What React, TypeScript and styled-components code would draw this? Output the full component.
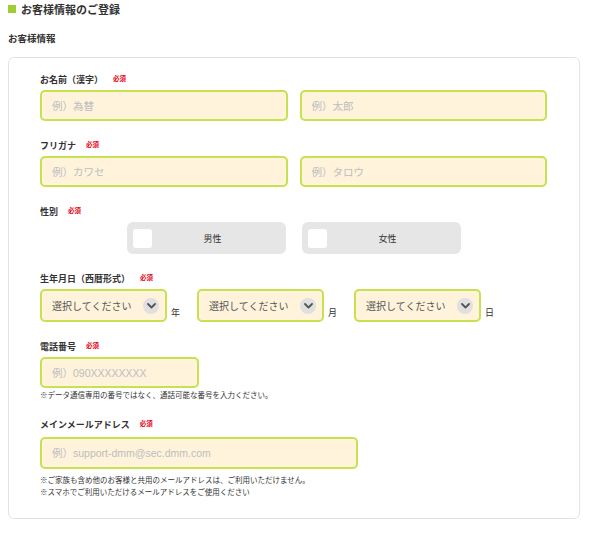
import styled, { createGlobalStyle } from "styled-components";

const GlobalStyle = createGlobalStyle`
  body {
    margin: 0;
    background: #fff;
    color: #333;
    font-family: "Noto Sans CJK JP", "Noto Sans", sans-serif;
  }
  * { box-sizing: border-box; }
`;

const Page = styled.div`
  width: 589px;
  padding: 0 9px 0 8px;
`;

const Title = styled.h1`
  display: flex;
  align-items: center;
  gap: 5px;
  margin: 0;
  height: 18px;
  font-size: 11px;
  font-weight: bold;
  color: #333;
  line-height: 18px;
  &::before {
    content: "";
    width: 8px;
    height: 8px;
    background: #9fce31;
  }
`;

const SubTitle = styled.h2`
  margin: 12px 0 0;
  font-size: 9.5px;
  font-weight: bold;
  line-height: 16px;
  color: #333;
`;

const Card = styled.div`
  margin-top: 11px;
  border: 1px solid #e3e3e3;
  border-radius: 6px;
  padding: 14px 32px 20px 31px;
`;

const Field = styled.div<{ $gap?: number }>`
  margin-top: ${(p) => p.$gap ?? 17}px;
  &:first-child {
    margin-top: 0;
  }
`;

const Label = styled.div<{ $mb?: number }>`
  display: flex;
  align-items: center;
  height: 14px;
  margin-bottom: ${(p) => p.$mb ?? 4}px;
  font-size: 9px;
  font-weight: bold;
  color: #333;
`;

const Required = styled.span`
  margin-left: 10px;
  margin-top: -3px;
  font-size: 6.5px;
  font-weight: bold;
  color: #e60012;
`;

const Pair = styled.div`
  display: grid;
  grid-template-columns: 1fr 1fr;
  gap: 12px;
  width: 507px;
`;

const TextInput = styled.input<{ $w?: number; $h?: number }>`
  display: block;
  width: ${(p) => (p.$w ? `${p.$w}px` : "100%")};
  height: ${(p) => p.$h ?? 31}px;
  padding: 0 10px;
  border: 2px solid #c6e251;
  border-radius: 5px;
  background: #fff3dc;
  font-family: "Liberation Sans", "Noto Sans CJK JP", sans-serif;
  font-size: 10.5px;
  color: #333;
  outline: none;
  &::placeholder {
    color: #bdbdbd;
  }
`;

const GenderRow = styled.div`
  display: flex;
  justify-content: center;
  gap: 16px;
  width: 507px;
`;

const GenderButton = styled.div`
  display: flex;
  align-items: center;
  width: 159px;
  height: 32px;
  padding: 0 12px 0 6px;
  border-radius: 6px;
  background: #e6e6e6;
  cursor: pointer;
`;

const CheckBox = styled.span`
  width: 19px;
  height: 19px;
  border-radius: 3px;
  background: #fff;
  flex: none;
`;

const GenderText = styled.span`
  flex: 1;
  text-align: center;
  font-size: 9px;
  color: #333;
`;

const DateRow = styled.div`
  display: flex;
  gap: 17px;
`;

const DateGroup = styled.div`
  display: flex;
  align-items: flex-end;
  gap: 4px;
`;

const SelectBox = styled.div`
  display: flex;
  align-items: center;
  justify-content: space-between;
  width: 127px;
  height: 33px;
  padding: 0 6px 0 10px;
  border: 2px solid #c6e251;
  border-radius: 5px;
  background: #fff3dc;
  cursor: pointer;
`;

const SelectText = styled.span`
  font-size: 10px;
  color: #555;
`;

const ChevronCircle = styled.span`
  display: flex;
  align-items: center;
  justify-content: center;
  width: 16px;
  height: 16px;
  border-radius: 50%;
  background: #e0e0e0;
`;

const Unit = styled.span`
  font-size: 9px;
  color: #333;
  line-height: 12px;
  padding-bottom: 3px;
`;

const Note = styled.p<{ $mt?: number }>`
  margin: ${(p) => p.$mt ?? 1}px 0 0;
  font-size: 7.5px;
  line-height: 12px;
  color: #333;
`;

const Chevron = () => (
  <svg width="9" height="6" viewBox="0 0 9 6">
    <path d="M1 1l3.5 3.5L8 1" fill="none" stroke="#555" strokeWidth="1.8" strokeLinecap="round" strokeLinejoin="round" />
  </svg>
);

const DateSelect = ({ unit }: { unit: string }) => (
  <DateGroup>
    <SelectBox>
      <SelectText>選択してください</SelectText>
      <ChevronCircle>
        <Chevron />
      </ChevronCircle>
    </SelectBox>
    <Unit>{unit}</Unit>
  </DateGroup>
);

const FieldLabel = ({ text, mb }: { text: string; mb?: number }) => (
  <Label $mb={mb}>
    {text}
    <Required>必須</Required>
  </Label>
);

export default function App() {
  return (
    <>
      <GlobalStyle />
      <Page>
        <Title>お客様情報のご登録</Title>
        <SubTitle>お客様情報</SubTitle>
        <Card>
          <Field>
            <FieldLabel text="お名前（漢字）" />
            <Pair>
              <TextInput placeholder="例）為替" />
              <TextInput placeholder="例）太郎" />
            </Pair>
          </Field>
          <Field>
            <FieldLabel text="フリガナ" />
            <Pair>
              <TextInput placeholder="例）カワセ" />
              <TextInput placeholder="例）タロウ" />
            </Pair>
          </Field>
          <Field>
            <FieldLabel text="性別" />
            <GenderRow>
              <GenderButton>
                <CheckBox />
                <GenderText>男性</GenderText>
              </GenderButton>
              <GenderButton>
                <CheckBox />
                <GenderText>女性</GenderText>
              </GenderButton>
            </GenderRow>
          </Field>
          <Field>
            <FieldLabel text="生年月日（西暦形式）" />
            <DateRow>
              <DateSelect unit="年" />
              <DateSelect unit="月" />
              <DateSelect unit="日" />
            </DateRow>
          </Field>
          <Field>
            <FieldLabel text="電話番号" />
            <TextInput $w={159} $h={31} placeholder="例）090XXXXXXXX" />
            <Note>※データ通信専用の番号ではなく、通話可能な番号を入力ください。</Note>
          </Field>
          <Field $gap={16}>
            <FieldLabel text="メインメールアドレス" mb={6} />
            <TextInput $w={318} $h={32} placeholder="例）support-dmm@sec.dmm.com" />
            <Note $mt={5}>※ご家族も含め他のお客様と共用のメールアドレスは、ご利用いただけません。</Note>
            <Note $mt={0}>※スマホでご利用いただけるメールアドレスをご使用ください</Note>
          </Field>
        </Card>
      </Page>
    </>
  );
}
